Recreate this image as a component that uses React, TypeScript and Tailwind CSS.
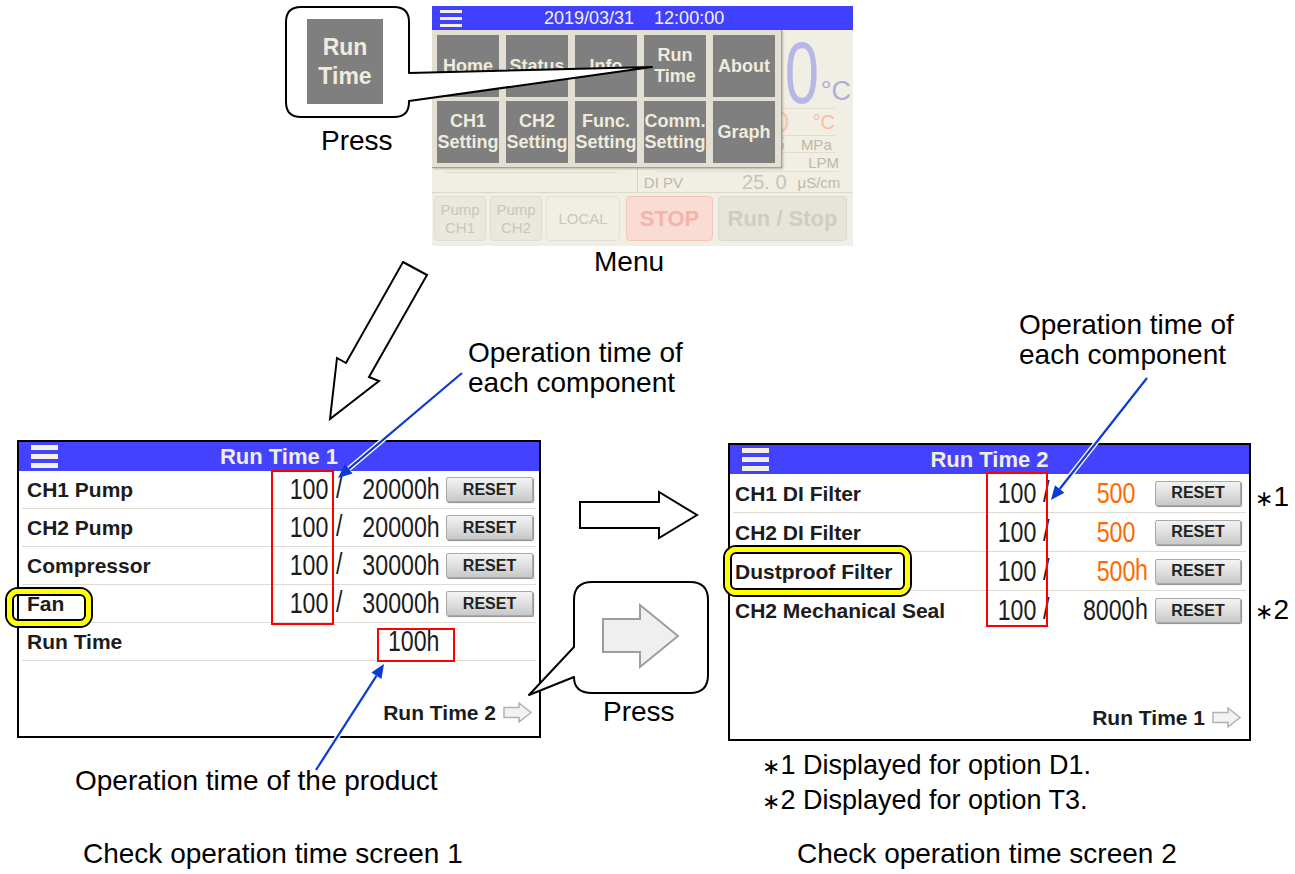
import React from 'react';

// arrowhead triangle for a line running from (ax,ay) to the tip (bx,by)
const head = (ax: number, ay: number, bx: number, by: number, len = 14, half = 6) => {
  const dx = bx - ax;
  const dy = by - ay;
  const l = Math.hypot(dx, dy);
  const ux = dx / l;
  const uy = dy / l;
  const cx = bx - ux * len;
  const cy = by - uy * len;
  return {
    base: [cx, cy],
    pts: `${bx},${by} ${cx - uy * half},${cy + ux * half} ${cx + uy * half},${cy - ux * half}`,
  };
};

const BlueArrow = ({ a, b }: { a: [number, number]; b: [number, number] }) => {
  const h = head(a[0], a[1], b[0], b[1]);
  return (
    <g>
      <line x1={a[0]} y1={a[1]} x2={h.base[0]} y2={h.base[1]} stroke="#ffffff" strokeWidth={5} />
      <line x1={a[0]} y1={a[1]} x2={h.base[0]} y2={h.base[1]} stroke="#0b3bd4" strokeWidth={2.2} />
      <polygon points={h.pts} fill="#0b3bd4" />
    </g>
  );
};

const Burger = ({ big }: { big?: boolean }) => (
  <div className={big ? 'flex flex-col gap-[4px] w-[27px]' : 'flex flex-col gap-[4px] w-[22px]'}>
    {[0, 1, 2].map((i) => (
      <div key={i} className={big ? 'h-[5px] bg-[#f4f1e4]' : 'h-[3px] bg-[#f4f1e4]'} />
    ))}
  </div>
);

// narrow digits of the touch panel
const Num = ({ children, left, className = '' }: { children: React.ReactNode; left?: boolean; className?: string }) => (
  <span
    className={`inline-block shrink-0 ${left ? 'origin-left' : 'origin-right'} scale-x-[0.8] text-[29px] leading-none ${className}`}
  >
    {children}
  </span>
);

// math asterisk used by the footnotes
const Star = () => <span className="-ml-[3px] text-[22px] leading-none font-['DejaVu_Sans',sans-serif]">∗</span>;

const Reset = ({ w }: { w: string }) => (
  <div
    className={`${w} h-[25px] flex items-center justify-center rounded-[2px] border border-[#a9a9a9] bg-linear-to-b from-[#f3f3f3] via-[#dfdfdf] to-[#c8c8c8] shadow-[1px_1px_1px_#8d8d8d] text-[16px] font-bold leading-none text-[#222222]`}
  >
    RESET
  </div>
);

const SmallArrow = () => (
  <svg width="29" height="21" viewBox="0 0 29 21">
    <polygon points="1,5.5 16,5.5 16,1 28,10.5 16,20 16,15.5 1,15.5" fill="#f2f2f2" stroke="#b3b3b3" strokeWidth="1.5" />
  </svg>
);

const PanelHeader = ({ title }: { title: string }) => (
  <div className="h-[29px] shrink-0 bg-[#4343ff] grid grid-cols-[1fr_auto_1fr] items-center">
    <div className="pl-[12px]">
      <Burger big />
    </div>
    <div className="text-[22px] font-bold leading-none text-[#f2eedc]">{title}</div>
    <div />
  </div>
);

function MenuScreen() {
  const faint = 'text-[15px] leading-none text-[#bbb8ad]';
  const menu = ['Home', 'Status', 'Info', 'Run\nTime', 'About', 'CH1\nSetting', 'CH2\nSetting', 'Func.\nSetting', 'Comm.\nSetting', 'Graph'];
  return (
    <div className="absolute left-[432px] top-[6px] w-[421px] h-[240px] bg-[#f1eee4] flex flex-col overflow-hidden">
      <div className="h-[24px] shrink-0 bg-[#4040ff] flex items-center pl-[8px]">
        <Burger />
        <div className="ml-[82px] text-[18px] leading-none text-[#f4f1e4] whitespace-pre">2019/03/31    12:00:00</div>
      </div>

      <div className="h-[163px] shrink-0 flex border-b border-[#dcd8cc]">
        <div className="w-[209px] flex flex-col justify-end pb-[19px]">
          <div className="border-b border-[#dcd8cc] ml-[13px] mr-[20px]" />
        </div>
        <div className="flex-1 border-l border-[#d8d4c8] flex flex-col">
          <div className="h-[80px] flex items-start justify-end pr-[2px] pt-[10px] border-b border-[#e1ddd2] mr-[18px]">
            <span className="inline-block h-[66px] origin-right scale-x-[0.7] text-[88px] leading-[66px] text-[#b7b7e6] -mr-[18px]">0</span>
            <span className="ml-[20px] mt-[38px] text-[27px] leading-none text-[#adade0] -mr-[18px]">°C</span>
          </div>
          <div className="h-[27px] flex items-center border-b border-[#e1ddd2] mr-[18px]">
            <span className="ml-[135px] text-[30px] leading-[22px] text-[#f8caab]">0</span>
            <span className="ml-[23px] text-[20px] leading-none text-[#f6bf9f]">°C</span>
          </div>
          <div className="h-[17px] flex items-center border-b border-[#e1ddd2] mr-[18px]">
            <span className="ml-[137px] text-[18px] leading-[15px] text-[#c7c4b9]">5</span>
            <span className={`ml-[16px] ${faint}`}>MPa</span>
          </div>
          <div className="h-[19px] flex items-center justify-end border-b border-[#e1ddd2] ml-[19px] mr-[14px]">
            <span className={faint}>LPM</span>
          </div>
          <div className="h-[20px] flex items-center">
            <span className={`ml-[6px] ${faint}`}>DI PV</span>
            <span className="ml-[59px] text-[20px] leading-none text-[#c7c4b9]">25. 0</span>
            <span className={`ml-[11px] ${faint}`}>μS/cm</span>
          </div>
        </div>
      </div>

      <div className="flex items-start pl-[2px] pt-[3px] text-center">
        <div className="w-[52px] h-[45px] rounded-[4px] border border-[#dedbd0] bg-[#ebe8dd] flex items-center justify-center text-[15px] leading-[18px] text-[#c9c6bc]">
          Pump<br />CH1
        </div>
        <div className="ml-[4px] w-[52px] h-[45px] rounded-[4px] border border-[#dedbd0] bg-[#ebe8dd] flex items-center justify-center text-[15px] leading-[18px] text-[#c9c6bc]">
          Pump<br />CH2
        </div>
        <div className="ml-[4px] w-[74px] h-[45px] rounded-[4px] border border-[#e2dfd5] bg-[#f1eee5] flex items-center justify-center text-[15px] leading-none text-[#c9c6bc]">
          LOCAL
        </div>
        <div className="ml-[6px] w-[87px] h-[45px] rounded-[4px] border border-[#f2c6bb] bg-[#f9dcd3] flex items-center justify-center text-[22px] font-bold leading-none text-[#f3b4a9]">
          STOP
        </div>
        <div className="ml-[5px] w-[129px] h-[45px] rounded-[4px] border border-[#dcd9ce] bg-[#e7e5da] flex items-center justify-center text-[22px] font-bold leading-none text-[#cfccc2]">
          Run / Stop
        </div>
      </div>

      {/* menu overlay */}
      <div className="absolute left-0 top-[24px] w-[350px] h-[138px] bg-[#e3dfd3] border-r border-b border-[#a3a199] shadow-[1px_1px_2px_rgba(0,0,0,0.25)] grid grid-cols-[repeat(5,62px)] grid-rows-[repeat(2,62px)] gap-x-[7px] gap-y-[4px] p-[5px]">
        {menu.map((m) => (
          <div
            key={m}
            className="bg-[#7f7f7f] flex items-center justify-center text-center whitespace-pre text-[18px] font-bold leading-[21px] text-[#efebdd]"
          >
            {m}
          </div>
        ))}
      </div>
    </div>
  );
}

function RunTime1() {
  const rows = [
    { name: 'CH1 Pump', max: '20000h' },
    { name: 'CH2 Pump', max: '20000h' },
    { name: 'Compressor', max: '30000h' },
    { name: 'Fan', max: '30000h' },
  ];
  return (
    <div className="absolute left-[17px] top-[440px] w-[524px] h-[298px] border-2 border-black bg-white flex flex-col text-[#1c1c1c]">
      <PanelHeader title="Run Time 1" />
      {rows.map((r) => (
        <div key={r.name} className="flex items-center h-[38px] shrink-0 mx-[3px] pl-[5px] border-b border-[#dedbd2]">
          <div className="w-[252px] text-[21px] font-bold leading-none">{r.name}</div>
          <div className="w-[49px] flex justify-end">
            <Num>100</Num>
          </div>
          <div className="w-[30px] pl-[8px]">
            <Num left>/</Num>
          </div>
          <div className="w-[82px] flex justify-end">
            <Num>{r.max}</Num>
          </div>
          <div className="ml-[6px]">
            <Reset w="w-[87px]" />
          </div>
        </div>
      ))}
      <div className="flex items-center h-[38px] shrink-0 mx-[3px] pl-[5px] border-b border-[#dedbd2]">
        <div className="w-[252px] text-[21px] font-bold leading-none">Run Time</div>
        <div className="w-[79px]" />
        <div className="w-[82px] flex justify-end">
          <Num>100h</Num>
        </div>
      </div>
      <div className="flex-1 flex items-end justify-end pr-[7px] pb-[12px]">
        <span className="text-[21px] font-bold leading-[23px]">Run Time 2</span>
        <span className="ml-[7px] mb-[1px]">
          <SmallArrow />
        </span>
      </div>
    </div>
  );
}

function RunTime2() {
  const rows = [
    { name: 'CH1 DI Filter', val: '500', h: false, orange: true },
    { name: 'CH2 DI Filter', val: '500', h: false, orange: true },
    { name: 'Dustproof Filter', val: '500', h: true, orange: true },
    { name: 'CH2 Mechanical Seal', val: '8000', h: true, orange: false },
  ];
  return (
    <div className="absolute left-[728px] top-[443px] w-[523px] h-[298px] border-2 border-black bg-white flex flex-col text-[#1c1c1c]">
      <PanelHeader title="Run Time 2" />
      {rows.map((r, i) => (
        <div
          key={r.name}
          className={`flex items-center h-[39px] shrink-0 mx-[3px] pl-[2px] ${i < 3 ? 'border-b border-[#dedbd2]' : ''}`}
        >
          <div className="w-[252px] text-[21px] font-bold leading-none">{r.name}</div>
          <div className="w-[49px] flex justify-end">
            <Num>100</Num>
          </div>
          <div className="w-[20px] pl-[7px]">
            <Num left>/</Num>
          </div>
          <div className="w-[79px] flex justify-end">
            <Num className={r.orange ? 'text-[#ff6a00]' : ''}>{r.val}</Num>
          </div>
          <div className="w-[13px]">
            {r.h && (
              <Num left className={r.orange ? 'text-[#ff6a00]' : ''}>
                h
              </Num>
            )}
          </div>
          <div className="ml-[7px]">
            <Reset w="w-[86px]" />
          </div>
        </div>
      ))}
      <div className="flex-1 flex items-end justify-end pr-[8px] pb-[10px]">
        <span className="text-[21px] font-bold leading-[23px]">Run Time 1</span>
        <span className="ml-[7px] mb-[1px]">
          <SmallArrow />
        </span>
      </div>
    </div>
  );
}

// yellow marker ring: black / yellow / black
const Ring = ({ className }: { className: string }) => (
  <div className={`absolute ${className} rounded-[13px] border-2 border-black`}>
    <div className="w-full h-full rounded-[11px] border-[5px] border-[#ffff00]">
      <div className="w-full h-full rounded-[6px] border-2 border-black" />
    </div>
  </div>
);

export default function App() {
  return (
    <div className="relative w-[1295px] h-[874px] bg-white overflow-hidden font-['Liberation_Sans',Arial,sans-serif] text-black">
      <MenuScreen />
      <RunTime1 />
      <RunTime2 />

      {/* highlight frames */}
      <div className="absolute left-[271px] top-[470px] w-[63px] h-[155px] border-2 border-[#ff0000]" />
      <div className="absolute left-[377px] top-[628px] w-[78px] h-[34px] border-2 border-[#ff0000]" />
      <div className="absolute left-[986px] top-[472px] w-[62px] h-[155px] border-2 border-[#ff0000]" />
      <Ring className="left-[5px] top-[587px] w-[88px] h-[41px]" />
      <Ring className="left-[723px] top-[545px] w-[189px] h-[52px]" />

      <svg className="absolute left-0 top-0 pointer-events-none" width={1295} height={874}>
        {/* callout for the menu key */}
        <path
          d="M301,7 H394 Q409,7 409,22 V73 L652,67 L409,101 V102 Q409,117 394,117 H301 Q286,117 286,102 V22 Q286,7 301,7 Z"
          fill="#ffffff"
          stroke="#000000"
          strokeWidth={2}
          strokeLinejoin="round"
        />
        {/* callout for the page key */}
        <path
          d="M592,582 H690 Q708,582 708,600 V675 Q708,693 690,693 H592 Q574,693 574,677 L529,695 L574,647 V600 Q574,582 592,582 Z"
          fill="#ffffff"
          stroke="#000000"
          strokeWidth={2}
          strokeLinejoin="round"
        />
        <polygon points="603,619 640,619 640,605 678,636 640,667 640,652 603,652" fill="#efefef" stroke="#9d9d9d" strokeWidth={2} />

        {/* hollow flow arrows */}
        <polygon points="403,262 427,275 369,377 379,381 330,419 337,358 346,363" fill="#ffffff" stroke="#000000" strokeWidth={2} strokeLinejoin="miter" />
        <polygon points="580,502 659,502 659,492 697,515 659,538 659,528 580,528" fill="#ffffff" stroke="#000000" strokeWidth={2} />

        <BlueArrow a={[462, 373]} b={[338, 478]} />
        <BlueArrow a={[1147, 378]} b={[1051, 500]} />
        <BlueArrow a={[316, 770]} b={[384, 664]} />
      </svg>

      <div className="absolute left-[307px] top-[19px] w-[76px] h-[85px] bg-[#7f7f7f] flex items-center justify-center text-center text-[23px] font-bold leading-[29px] text-[#efebdd]">
        Run
        <br />
        Time
      </div>

      <div className="absolute left-[321px] top-[127px] text-[28px] leading-none">Press</div>
      <div className="absolute left-[594px] top-[248px] text-[28px] leading-none">Menu</div>
      <div className="absolute left-[468px] top-[338px] text-[28px] leading-[30px]">
        Operation time of
        <br />
        each component
      </div>
      <div className="absolute left-[1019px] top-[310px] text-[28px] leading-[30px]">
        Operation time of
        <br />
        each component
      </div>
      <div className="absolute left-[603px] top-[698px] text-[28px] leading-none">Press</div>
      <div className="absolute left-[1258px] top-[483px] text-[28px] leading-none">
        <Star />1
      </div>
      <div className="absolute left-[1258px] top-[596px] text-[28px] leading-none">
        <Star />2
      </div>
      <div className="absolute left-[75px] top-[767px] text-[28px] leading-none">Operation time of the product</div>
      <div className="absolute left-[765px] top-[748px] text-[27px] leading-[35px]">
        <Star />1 Displayed for option D1.
        <br />
        <Star />2 Displayed for option T3.
      </div>
      <div className="absolute left-[83px] top-[840px] text-[28px] leading-none">Check operation time screen 1</div>
      <div className="absolute left-[797px] top-[840px] text-[28px] leading-none">Check operation time screen 2</div>
    </div>
  );
}
